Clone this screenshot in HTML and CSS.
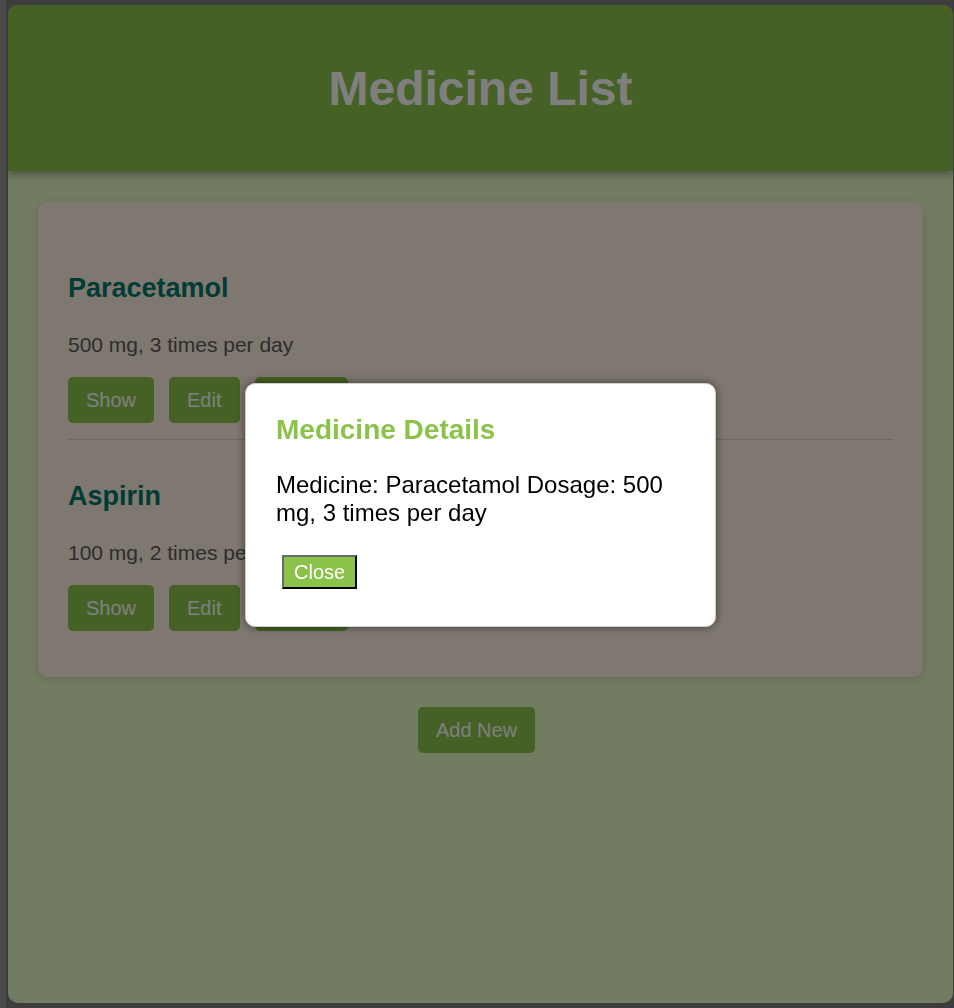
FILE: index.html
```html
<!DOCTYPE html>
<html lang="en">
<head>
<meta charset="utf-8">
<title>Medicine List</title>
<link rel="stylesheet" href="styles.css">
</head>
<body>
<div class="page">
  <header class="header">
    <h1 class="title">Medicine List</h1>
  </header>
  <main class="main">
    <section class="card">
      <div class="item">
        <h3 class="item-name">Paracetamol</h3>
        <p class="item-dose">500 mg, 3 times per day</p>
        <div class="actions">
          <button class="btn">Show</button>
          <button class="btn">Edit</button>
          <button class="btn">Delete</button>
        </div>
      </div>
      <div class="item item-last">
        <h3 class="item-name">Aspirin</h3>
        <p class="item-dose">100 mg, 2 times per day</p>
        <div class="actions">
          <button class="btn">Show</button>
          <button class="btn">Edit</button>
          <button class="btn">Delete</button>
        </div>
      </div>
    </section>
    <div class="add-row">
      <button class="btn">Add New</button>
    </div>
  </main>
</div>
<div class="overlay">
  <div class="modal">
    <h2 class="modal-title">Medicine Details</h2>
    <p class="modal-text">Medicine: Paracetamol Dosage: 500 mg, 3 times per day</p>
    <button class="close-btn">Close</button>
  </div>
</div>
</body>
</html>
```
FILE: styles.css
```css
html, body {
  margin: 0;
  height: 100%;
}
body {
  background: #7a7a7a;
  box-shadow: inset 6px 0 0 #949494;
  padding: 5px 1px 5px 8px;
  box-sizing: border-box;
  font-family: "Liberation Sans", Arial, sans-serif;
  overflow: hidden;
}
.page {
  height: 998px;
  background: #e4f8c0;
  border-radius: 10px;
  overflow: hidden;
}
.header {
  background: #8bc34a;
  padding: 56px 0 55px;
  text-align: center;
  box-shadow: 0 3px 8px rgba(0, 0, 0, 0.35);
  position: relative;
}
.title {
  margin: 0;
  font-size: 48px;
  font-weight: bold;
  line-height: 55px;
  color: #ffffff;
}
.main {
  padding: 31px 30px 0;
}
.card {
  background: #fff0e0;
  border-radius: 10px;
  padding: 30px;
  box-shadow: 0 2px 10px rgba(0, 0, 0, 0.12);
}
.item {
  padding: 15px 0 16px;
  border-bottom: 1px solid #d8d0c6;
}
.item-last {
  border-bottom: none;
}
.item-name {
  margin: 26px 0 29px;
  font-size: 27px;
  line-height: 31px;
  font-weight: bold;
  color: #00796b;
}
.item-dose {
  margin: 0 0 20px;
  font-size: 21px;
  line-height: 24px;
  color: #5a5a5a;
}
.actions {
  display: flex;
  gap: 15px;
}
.btn {
  background: #8bc34a;
  color: #ffffff;
  border: none;
  border-radius: 5px;
  padding: 11px 18px;
  font-family: "Liberation Sans", Arial, sans-serif;
  font-size: 20px;
  line-height: 24px;
}
.add-row {
  display: flex;
  justify-content: center;
  margin-top: 30px;
  padding-right: 8px;
}
.overlay {
  position: fixed;
  inset: 0;
  background: rgba(0, 0, 0, 0.5);
  padding: 5px 1px 5px 8px;
  display: flex;
  align-items: center;
  justify-content: center;
}
.modal {
  width: 409px;
  background: #ffffff;
  border: 1px solid #cfcfcf;
  border-radius: 10px;
  padding: 30px;
  box-shadow: 0 0 10px rgba(0, 0, 0, 0.5);
  margin-top: 2px;
}
.modal-title {
  margin: 0 0 25px;
  font-size: 28px;
  line-height: 32px;
  font-weight: bold;
  color: #8bc34a;
}
.modal-text {
  margin: 0 0 29px;
  font-size: 24px;
  line-height: 27.5px;
  color: #000000;
}
.close-btn {
  display: block;
  margin: 0 0 7px 6px;
  background: #8bc34a;
  color: #ffffff;
  border: 2px solid;
  border-color: #6b6b6b #000000 #000000 #6b6b6b;
  padding: 4px 10px;
  font-family: "Liberation Sans", Arial, sans-serif;
  font-size: 20px;
  line-height: 22px;
}
```
